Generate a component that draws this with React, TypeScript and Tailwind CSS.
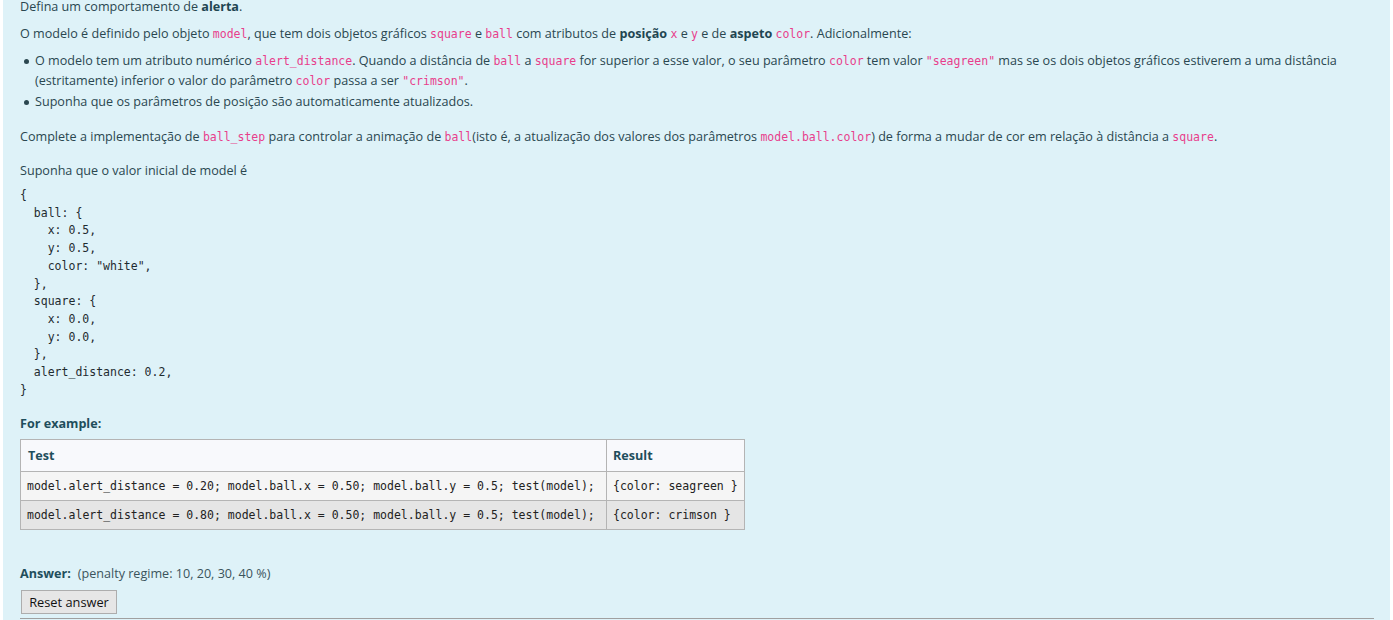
import React from "react";

const Code = ({ children }: { children: React.ReactNode }) => (
  <code className="font-['DejaVu_Sans_Mono',monospace] text-[11.5px] text-[#e83e8c]">
    {children}
  </code>
);

const Bullet = () => (
  <span className="mt-[8px] mr-[6px] inline-block h-[5px] w-[5px] shrink-0 rounded-full bg-[#2b4750]" />
);

const initialModel = `{
  ball: {
    x: 0.5,
    y: 0.5,
    color: "white",
  },
  square: {
    x: 0.0,
    y: 0.0,
  },
  alert_distance: 0.2,
}`;

const rows = [
  {
    test: "model.alert_distance = 0.20; model.ball.x = 0.50; model.ball.y = 0.5; test(model);",
    result: "{color: seagreen }",
    bg: "bg-[#f5f5f5]",
  },
  {
    test: "model.alert_distance = 0.80; model.ball.x = 0.50; model.ball.y = 0.5; test(model);",
    result: "{color: crimson }",
    bg: "bg-[#e5e5e5]",
  },
];

export default function App() {
  return (
    <div className="h-[620px] overflow-hidden bg-white font-['Open_Sans',sans-serif] text-[12.6px] leading-[20px] text-[#2a4750]">
      <div className="ml-[3px] flow-root h-[620px] w-[1387px] bg-[#def2f8] pl-[17px] pr-[16px]">
        <p className="-mt-[3px]">
          Defina um comportamento de <b className="font-bold text-[#1f4652]">alerta</b>.
        </p>

        <p className="mt-[7px]">
          O modelo é definido pelo objeto <Code>model</Code>, que tem dois objetos gráficos{" "}
          <Code>square</Code> e <Code>ball</Code> com atributos de{" "}
          <b className="font-bold text-[#1f4652]">posição</b> <Code>x</Code> e <Code>y</Code> e de{" "}
          <b className="font-bold text-[#1f4652]">aspeto</b> <Code>color</Code>. Adicionalmente:
        </p>

        <ul className="mt-[7px] pl-[4px]">
          <li className="flex">
            <Bullet />
            <span>
              O modelo tem um atributo numérico <Code>alert_distance</Code>. Quando a distância de{" "}
              <Code>ball</Code> a <Code>square</Code> for superior a esse valor, o seu parâmetro{" "}
              <Code>color</Code> tem valor <Code>"seagreen"</Code> mas se os dois objetos gráficos
              estiverem a uma distância
              <br />
              (estritamente) inferior o valor do parâmetro <Code>color</Code> passa a ser{" "}
              <Code>"crimson"</Code>.
            </span>
          </li>
          <li className="mt-px flex">
            <Bullet />
            <span>Suponha que os parâmetros de posição são automaticamente atualizados.</span>
          </li>
        </ul>

        <p className="mt-[15px]">
          Complete a implementação de <Code>ball_step</Code> para controlar a animação de{" "}
          <Code>ball</Code>(isto é, a atualização dos valores dos parâmetros{" "}
          <Code>model.ball.color</Code>) de forma a mudar de cor em relação à distância a{" "}
          <Code>square</Code>.
        </p>

        <p className="mt-[14px]">Suponha que o valor inicial de model é</p>

        <pre className="mt-[6px] font-['DejaVu_Sans_Mono',monospace] text-[11.5px] leading-[17.7px] text-[#1e2b30]">
          {initialModel}
        </pre>

        <h4 className="mt-[15px] font-bold text-[#1f4e5c]">For example:</h4>

        <table className="mt-[5px] w-[725px] border-collapse border border-[#b4b4b4] font-['DejaVu_Sans_Mono',monospace] text-[11.5px] text-[#222]">
          <thead>
            <tr className="h-[32px] bg-[#f8f9fc]">
              <th className="w-[586px] border border-[#b4b4b4] px-[7px] text-left font-['Open_Sans',sans-serif] text-[12.6px] font-bold text-[#1f4e5c]">
                Test
              </th>
              <th className="border border-[#b4b4b4] px-[6px] text-left font-['Open_Sans',sans-serif] text-[12.6px] font-bold text-[#1f4e5c]">
                Result
              </th>
            </tr>
          </thead>
          <tbody>
            {rows.map((r) => (
              <tr key={r.result} className={`h-[29px] ${r.bg}`}>
                <td className="whitespace-nowrap border border-[#b4b4b4] px-[6px]">{r.test}</td>
                <td className="whitespace-nowrap border border-[#b4b4b4] px-[6px]">{r.result}</td>
              </tr>
            ))}
          </tbody>
        </table>

        <div className="mt-[34px] flex items-center">
          <span className="font-bold text-[#1f4e5c]">Answer:</span>
          <span className="ml-[7px] text-[#3b545c]">(penalty regime: 10, 20, 30, 40 %)</span>
        </div>

        <button className="mt-[6px] ml-px block h-[24px] w-[96px] border border-[#adadad] bg-[#e6e6e6] text-[12.8px] leading-[20px] text-[#111]">
          Reset answer
        </button>

        <div className="mt-[4px] w-[1354px] border-t border-[#a0a0a0]" />
      </div>
    </div>
  );
}
